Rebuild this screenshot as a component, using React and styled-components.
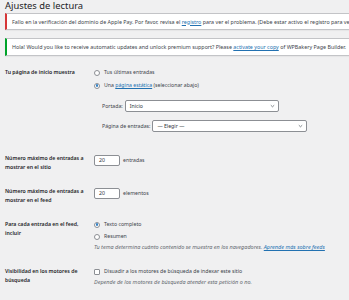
import styled, { createGlobalStyle } from "styled-components";

const GlobalStyle = createGlobalStyle`
  body {
    margin: 0;
    background: #f0f0f1;
    overflow: hidden;
    font-family: "Noto Sans", "Open Sans", sans-serif;
    color: #3c434a;
  }
`;

const Wrap = styled.div`
  width: 440px;
  padding-left: 5px;
`;

const Title = styled.h1`
  margin: 0;
  font-size: 9.4px;
  font-weight: 400;
  line-height: 12px;
  color: #1d2327;
`;

const Notice = styled.div`
  display: flex;
  align-items: center;
  height: ${({ $h }) => $h}px;
  margin-top: ${({ $top }) => $top}px;
  padding: 0 5px;
  background: #fff;
  border: 1px solid #c3c4c7;
  border-left: 2px solid ${({ $tone }) => ($tone === "error" ? "#d63638" : "#00a32a")};
  box-shadow: 0 1px 1px rgba(0, 0, 0, 0.04);
  font-size: 5.35px;
  white-space: nowrap;
`;

const Link = styled.a`
  color: #2271b1;
  text-decoration: underline;
`;

const Table = styled.div`
  margin-top: 12px;
`;

const Row = styled.div`
  display: grid;
  grid-template-columns: 89px 1fr;
  padding: ${({ $pad }) => $pad};
`;

const Th = styled.div`
  width: 82px;
  font-size: 5.2px;
  font-weight: 600;
  line-height: 9px;
  color: #1d2327;
`;

const Td = styled.div`
  display: flex;
  flex-direction: column;
  font-size: 5.2px;
  line-height: 9px;
`;

const Choice = styled.label`
  display: flex;
  align-items: center;
  gap: 4px;
  margin-top: ${({ $top }) => $top || 0}px;
`;

const Radio = styled.span`
  position: relative;
  width: 6px;
  height: 6px;
  box-sizing: border-box;
  border: 1px solid #8c8f94;
  border-radius: 50%;
  background: #fff;

  &::after {
    content: "";
    display: ${({ $checked }) => ($checked ? "block" : "none")};
    position: absolute;
    inset: 0.6px;
    border-radius: 50%;
    background: #3582c4;
  }
`;

const Checkbox = styled.span`
  width: 6px;
  height: 6px;
  box-sizing: border-box;
  border: 1px solid #8c8f94;
  border-radius: 1px;
  background: #fff;
`;

const PageList = styled.div`
  display: flex;
  flex-direction: column;
  gap: 8px;
  margin: 10px 0 8px 8px;
`;

const SelectRow = styled.div`
  display: flex;
  align-items: center;
  gap: 2px;
`;

const Select = styled.div`
  display: flex;
  align-items: center;
  justify-content: space-between;
  width: ${({ $w }) => $w}px;
  height: 12px;
  box-sizing: border-box;
  padding: 0 3px 0 4px;
  background: #fff;
  border: 1px solid #8c8f94;
  border-radius: 2px;
  color: #2c3338;
`;

const Chevron = () => (
  <svg width="5" height="4" viewBox="0 0 5 4">
    <path d="M0.8 1.2 L2.5 2.8 L4.2 1.2" fill="none" stroke="#50575e" strokeWidth="0.7" />
  </svg>
);

const InputRow = styled.div`
  display: flex;
  align-items: center;
  gap: 3px;
  margin-top: 1px;
`;

const Input = styled.div`
  width: 26px;
  height: 11px;
  box-sizing: border-box;
  padding: 0 4px;
  display: flex;
  align-items: center;
  background: #fff;
  border: 1px solid #8c8f94;
  border-radius: 2px;
  color: #2c3338;
`;

const Description = styled.p`
  margin: ${({ $top }) => $top || 0}px 0 0;
  font-size: 5.5px;
  font-style: italic;
  color: #646970;
`;

export default function App() {
  return (
    <>
      <GlobalStyle />
      <Wrap>
        <Title>Ajustes de lectura</Title>
        <Notice $tone="error" $h={15} $top={1}>
          Fallo en la verificación del dominio de Apple Pay. Por favor, revisa el&nbsp;
          <Link>registro</Link>&nbsp;para ver el problema. (Debe estar activo el registro para ver los registros)
        </Notice>
        <Notice $tone="success" $h={16} $top={8}>
          Hola! Would you like to receive automatic updates and unlock premium support? Please&nbsp;
          <Link>activate your copy</Link>&nbsp;of WPBakery Page Builder.
        </Notice>

        <Table>
          <Row $pad="0 0 14px">
            <Th>Tu página de inicio muestra</Th>
            <Td>
              <Choice>
                <Radio />
                Tus últimas entradas
              </Choice>
              <Choice $top={4}>
                <Radio $checked />
                <span>
                  Una <Link>página estática</Link> (seleccionar abajo)
                </span>
              </Choice>
              <PageList>
                <SelectRow>
                  Portada:
                  <Select $w={154}>
                    Inicio
                    <Chevron />
                  </Select>
                </SelectRow>
                <SelectRow>
                  Página de entradas:
                  <Select $w={155}>
                    — Elegir —
                    <Chevron />
                  </Select>
                </SelectRow>
              </PageList>
            </Td>
          </Row>

          <Row $pad="0 0 15px">
            <Th>Número máximo de entradas a mostrar en el sitio</Th>
            <Td>
              <InputRow>
                <Input>20</Input>
                entradas
              </InputRow>
            </Td>
          </Row>

          <Row $pad="0 0 15px">
            <Th>Número máximo de entradas a mostrar en el feed</Th>
            <Td>
              <InputRow>
                <Input>20</Input>
                elementos
              </InputRow>
            </Td>
          </Row>

          <Row $pad="0 0 15px">
            <Th>Para cada entrada en el feed, incluir</Th>
            <Td>
              <Choice>
                <Radio $checked />
                Texto completo
              </Choice>
              <Choice $top={3}>
                <Radio />
                Resumen
              </Choice>
              <Description $top={2}>
                Tu tema determina cuánto contenido se muestra en los navegadores.{" "}
                <Link>Aprende más sobre feeds</Link>
              </Description>
            </Td>
          </Row>

          <Row $pad="0">
            <Th>Visibilidad en los motores de búsqueda</Th>
            <Td>
              <Choice>
                <Checkbox />
                Disuadir a los motores de búsqueda de indexar este sitio
              </Choice>
              <Description $top={2}>
                Depende de los motores de búsqueda atender esta petición o no.
              </Description>
            </Td>
          </Row>
        </Table>
      </Wrap>
    </>
  );
}
